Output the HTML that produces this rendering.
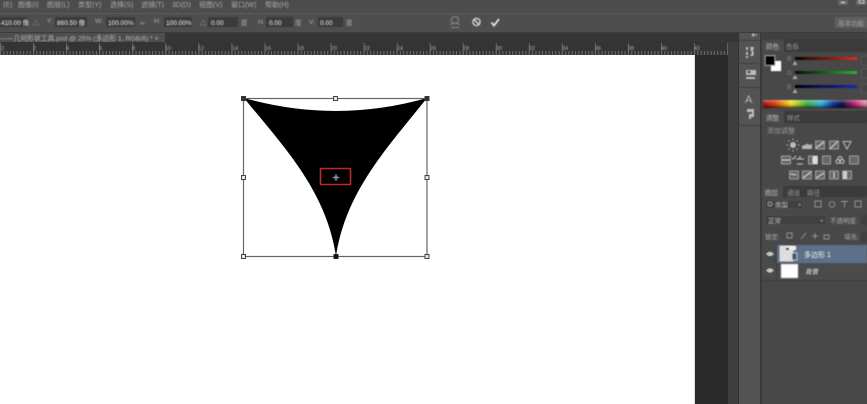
<!DOCTYPE html>
<html lang="zh"><head><meta charset="utf-8"><title>几何形状工具</title>
<style>
html,body{margin:0;padding:0;background:#484848;width:867px;height:404px;overflow:hidden}
svg{display:block}
text{font-family:"Liberation Sans","Noto Sans CJK SC",sans-serif;fill:#aaa;font-size:7px}
.b{filter:url(#bl)}
</style></head><body>
<svg width="867" height="404" viewBox="0 0 867 404" xmlns="http://www.w3.org/2000/svg">
<defs>
<filter id="bl" x="-5%" y="-5%" width="110%" height="110%"><feGaussianBlur stdDeviation="0.6"/></filter>
<pattern id="t" x="0" y="42" width="3.305" height="13" patternUnits="userSpaceOnUse"><rect x="0" y="9" width="1" height="4" fill="#6c6c6c"/></pattern>
<pattern id="T" x="0" y="42" width="33.05" height="13" patternUnits="userSpaceOnUse"><rect x="0" y="1" width="1" height="12" fill="#6a6a6a"/></pattern>
<linearGradient id="sp" x1="0" x2="1" y1="0" y2="0">
<stop offset="0" stop-color="#a01010"/><stop offset=".12" stop-color="#e04010"/><stop offset=".27" stop-color="#f0e020"/><stop offset=".42" stop-color="#40b040"/><stop offset=".56" stop-color="#30b0e0"/><stop offset=".68" stop-color="#103090"/><stop offset=".76" stop-color="#101040"/><stop offset=".88" stop-color="#c02070"/><stop offset="1" stop-color="#f090b0"/></linearGradient>
<linearGradient id="wb" x1="0" x2="0" y1="0" y2="1"><stop offset="0" stop-color="#fff" stop-opacity=".35"/><stop offset=".45" stop-color="#fff" stop-opacity="0"/><stop offset=".55" stop-color="#000" stop-opacity="0"/><stop offset="1" stop-color="#000" stop-opacity=".65"/></linearGradient>
<linearGradient id="r" x1="0" x2="1"><stop offset="0" stop-color="#100000"/><stop offset="1" stop-color="#d83020"/></linearGradient>
<linearGradient id="g" x1="0" x2="1"><stop offset="0" stop-color="#001000"/><stop offset="1" stop-color="#30b030"/></linearGradient>
<linearGradient id="bb" x1="0" x2="1"><stop offset="0" stop-color="#000010"/><stop offset="1" stop-color="#1828b0"/></linearGradient>
</defs>

<!-- bars -->
<rect width="867" height="404" fill="#484848"/>
<rect width="867" height="13" fill="#4c4c4c"/>
<rect y="13" width="867" height="1" fill="#5a5a5a"/>
<rect y="14" width="867" height="18" fill="#4e4e4e"/>
<rect y="32" width="867" height="1" fill="#3c3c3c"/>
<rect y="33" width="738" height="9" fill="#363636"/>
<rect x="0" y="33" width="165" height="9" fill="#4e4e4e"/>
<rect y="42" width="728" height="13" fill="#343434"/>
<rect y="42" width="728" height="13" fill="url(#t)"/>
<rect y="42" width="728" height="13" fill="url(#T)"/>

<!-- document area -->
<rect y="55" width="694" height="349" fill="#fff"/>
<rect x="694" y="55" width="1" height="349" fill="#ddd"/>
<rect x="695" y="55" width="33" height="349" fill="#2a2a2a"/>
<rect x="728" y="42" width="11" height="362" fill="#3e3e3e"/>
<rect x="738" y="33" width="1" height="371" fill="#333"/>
<rect x="739" y="33" width="21" height="371" fill="#535353"/>
<rect x="760" y="33" width="3" height="371" fill="#3a3a3a"/>
<rect x="762" y="33" width="105" height="371" fill="#484848"/>

<!-- shape -->
<path d="M244 98 Q336 124 427 98 C389 146 346 190 336 256 C326 190 283 146 244 98Z" fill="#000"/>
<rect x="243.500" y="98.500" width="183.500" height="158" fill="none" stroke="#666" stroke-width="1.200"/>
<g fill="#e8e8e8" stroke="#444" stroke-width="1">
<rect x="333.500" y="96.500" width="4" height="4"/>
<rect x="241.500" y="175.500" width="4" height="4"/>
<rect x="425" y="175.500" width="4" height="4"/>
<rect x="241.500" y="254.500" width="4" height="4"/>
<rect x="425" y="254.500" width="4" height="4"/>
</g>
<rect x="241.500" y="96.500" width="4" height="4" fill="#333" stroke="#333"/>
<rect x="425" y="96.500" width="4" height="4" fill="#333" stroke="#333"/>
<rect x="334" y="254.500" width="4" height="4" fill="#111" stroke="#222"/>
<rect x="320.500" y="168.500" width="30" height="16" fill="none" stroke="#c02830" stroke-width="1.600" rx=".5"/>
<g stroke="#888" stroke-width="1" fill="none"><circle cx="336" cy="177.500" r="1.600"/><path d="M336 174V181M332.500 177.500H339.500"/></g>

<g class="b">
<!-- menu -->
<text x="3" y="7">(E)</text><text x="18" y="7">图像(I)</text><text x="47" y="7">图层(L)</text><text x="78" y="7">类型(Y)</text><text x="110" y="7">选择(S)</text><text x="141" y="7">滤镜(T)</text><text x="172" y="7">3D(D)</text><text x="199" y="7">视图(V)</text><text x="231" y="7">窗口(W)</text><text x="265" y="7">帮助(H)</text>
<rect x="838" y="0" width="10" height="5" fill="#666"/><rect x="841" y="2" width="4" height="1" fill="#ddd"/>
<rect x="856" y="0" width="11" height="5" fill="#666"/><rect x="859" y="0" width="5" height="3" fill="none" stroke="#ccc" stroke-width=".8"/>

<!-- options -->
<g fill="#3a3a3a"><rect x="0" y="17" width="27" height="10"/><rect x="55" y="17" width="32" height="10"/><rect x="106" y="17" width="29" height="10"/><rect x="164" y="17" width="28" height="10"/><rect x="208" y="17" width="30" height="10"/><rect x="266" y="17" width="27" height="10"/><rect x="318" y="17" width="25" height="10"/></g>
<text x="1" y="25" style="fill:#ccc;font-size:6.500px">410.00 像</text>
<text x="33" y="25" style="font-size:6.500px">△</text><text x="47" y="23" style="font-size:6.500px">Y:</text>
<text x="57" y="25" style="fill:#ccc;font-size:6.500px">860.50 像</text>
<text x="95" y="23" style="font-size:6.500px">W:</text><text x="108" y="25" style="fill:#ccc;font-size:6.500px">100.00%</text>
<text x="140" y="25" style="font-size:6.500px">∞</text><text x="154" y="23" style="font-size:6.500px">H:</text><text x="166" y="25" style="fill:#ccc;font-size:6.500px">100.00%</text>
<text x="200" y="25" style="font-size:6.500px">△</text><text x="211" y="25" style="fill:#ccc;font-size:6.500px">0.00</text><text x="241" y="25" style="font-size:6.500px">度</text>
<text x="258" y="24" style="font-size:6.500px">H:</text><text x="269" y="25" style="fill:#ccc;font-size:6.500px">0.00</text><text x="295" y="25" style="font-size:6.500px">度</text>
<text x="309" y="24" style="font-size:6.500px">V:</text><text x="320" y="25" style="fill:#ccc;font-size:6.500px">0.00</text><text x="346" y="25" style="font-size:6.500px">度</text>
<!-- warp / cancel / commit -->
<g fill="none" stroke="#888" stroke-width="1"><circle cx="455" cy="20" r="3.500"/><path d="M450 24.500Q455 22 460 24.500M451 27.500H459"/></g>
<g fill="none" stroke="#ddd" stroke-width="1.300"><circle cx="476.500" cy="22" r="3.600"/><path d="M474 19.500L479 24.500"/></g>
<path d="M491.500 22.500L494 25.500L499 19" fill="none" stroke="#e4e4e4" stroke-width="1.800"/>
<rect x="835" y="17" width="32" height="11" fill="#5e5e5e"/>
<text x="838" y="25.500" style="fill:#999;font-size:6.500px">基本功能</text>

<!-- tab -->
<text x="0" y="40.500" style="font-size:6.800px;fill:#b8b8b8">——几何形状工具.psd @ 25% (多边形 1, RGB/8) *  ×</text>

<!-- ruler labels -->
<g style="font-size:5.500px">
<text x="1" y="50" style="font-size:5.500px">0</text><text x="33" y="50" style="font-size:5.500px">2</text><text x="66" y="50" style="font-size:5.500px">4</text><text x="99" y="50" style="font-size:5.500px">6</text><text x="132" y="50" style="font-size:5.500px">8</text><text x="165" y="50" style="font-size:5.500px">10</text><text x="198" y="50" style="font-size:5.500px">12</text><text x="232" y="50" style="font-size:5.500px">14</text><text x="265" y="50" style="font-size:5.500px">16</text><text x="298" y="50" style="font-size:5.500px">18</text><text x="331" y="50" style="font-size:5.500px">20</text><text x="364" y="50" style="font-size:5.500px">22</text><text x="397" y="50" style="font-size:5.500px">24</text><text x="430" y="50" style="font-size:5.500px">26</text><text x="463" y="50" style="font-size:5.500px">28</text><text x="496" y="50" style="font-size:5.500px">30</text><text x="529" y="50" style="font-size:5.500px">32</text><text x="562" y="50" style="font-size:5.500px">34</text><text x="595" y="50" style="font-size:5.500px">36</text><text x="628" y="50" style="font-size:5.500px">38</text><text x="661" y="50" style="font-size:5.500px">40</text><text x="694" y="50" style="font-size:5.500px">42</text>
</g>

<!-- strip -->
<path d="M752 35H757M752 35L754 33.500M752 35L754 36.500" stroke="#ccc" fill="none" stroke-width=".8"/>
<g fill="#3e3e3e"><rect x="739" y="40" width="21" height="1"/><rect x="739" y="63" width="21" height="1"/><rect x="739" y="87" width="21" height="1"/><rect x="739" y="125" width="21" height="1"/></g>
<g fill="#bbb">
<rect x="746" y="47" width="2" height="3"/><rect x="746" y="52" width="2" height="3"/><rect x="746" y="56" width="2" height="2"/><path d="M750 47h4l-1 4 1 2-1 3h-3l2-3-1-2z"/>
<rect x="746" y="70" width="10" height="5"/><circle cx="749" cy="72" r="1.500" fill="#444"/><rect x="746" y="77" width="9" height="2"/>
<path d="M749 114h3v-2h2v5h-3v2h-2z"/><rect x="747" y="109" width="7" height="3"/>
</g>
<text x="745" y="103" style="font-size:11px;fill:#bbb">A</text>

<!-- colour panel -->
<rect x="762" y="33" width="105" height="7" fill="#404040"/>
<rect x="762" y="40" width="105" height="12" fill="#3a3a3a"/>
<rect x="762" y="40" width="22" height="12" fill="#4c4c4c"/>
<text x="766" y="48.500" style="font-size:6.500px">颜色</text><text x="786" y="48.500" style="font-size:6.500px;fill:#888">色板</text>
<rect x="771" y="61" width="10" height="10" fill="#fff" stroke="#ccc" stroke-width=".5"/>
<rect x="765" y="55.500" width="10" height="10" fill="#000" stroke="#bbb" stroke-width=".7"/>
<g><text x="787" y="61" style="font-size:6px;fill:#888">R</text><text x="787" y="75" style="font-size:6px;fill:#888">G</text><text x="787" y="89" style="font-size:6px;fill:#888">B</text></g>
<rect x="795" y="57" width="62" height="3" fill="url(#r)"/><rect x="795" y="71" width="62" height="3" fill="url(#g)"/><rect x="795" y="85" width="62" height="3" fill="url(#bb)"/>
<g fill="#aaa"><path d="M795 61l-2.500 4h5z"/><path d="M795 75l-2.500 4h5z"/><path d="M795 89l-2.500 4h5z"/></g>
<g fill="#444" stroke="#5c5c5c" stroke-width=".7"><rect x="861.500" y="56" width="7" height="9"/><rect x="861.500" y="69" width="7" height="9"/><rect x="861.500" y="84" width="7" height="9"/></g>
<rect x="763" y="100" width="104" height="8" fill="url(#sp)"/>
<rect x="763" y="100" width="104" height="8" fill="url(#wb)"/>

<!-- adjustments -->
<rect x="762" y="111" width="105" height="12" fill="#3a3a3a"/>
<rect x="762" y="111" width="22" height="12" fill="#4c4c4c"/>
<text x="766" y="120" style="font-size:6.500px">调整</text><text x="787" y="120" style="font-size:6.500px;fill:#888">样式</text>
<text x="767" y="133" style="font-size:7px;fill:#999">添加调整</text>
<g fill="none" stroke="#bbb" stroke-width="1">
<circle cx="793" cy="145" r="2.500" fill="#bbb"/><path d="M793 140v-1.500M793 151.500V150M788 145h-1.500M799.500 145H798M789.500 141.500l-1-1M797.500 149.500l-1-1M796.500 141.500l1-1M788.500 149.500l1-1"/>
<path d="M843 141.500h8l-4 7.500z"/>
</g>
<path d="M802 149v-3l1-1 1 1 1-2 1 1 1-2 1 2 1-1 1 1 2-1v5z" fill="#b4b4b4"/>
<g fill="#666" stroke="#aaa" stroke-width=".8">
<rect x="815.500" y="141" width="9" height="8"/><rect x="829.500" y="141" width="9" height="8"/>
<rect x="781.500" y="156" width="9" height="8"/><rect x="808.500" y="156" width="9" height="8"/><rect x="822.500" y="156" width="8" height="8"/><rect x="849.500" y="156" width="9" height="8"/>
<rect x="789.500" y="171" width="9" height="8"/><rect x="802.500" y="171" width="9" height="8"/><rect x="815.500" y="171" width="9" height="8"/><rect x="829.500" y="171" width="9" height="8"/><rect x="842.500" y="171" width="9" height="8"/>
</g>
<g stroke="#ccc" stroke-width="1.100" fill="none">
<path d="M816 148L824 142M830 149l8-8M782 160h8M813 156.500v7M790.500 174l6 1M803 178l8-6M816 178l8-5M834 172v6"/>
<path d="M796 156l-3 3h-1M800 156v3M796 159h8M797 164h6"/>
<circle cx="840" cy="158.500" r="2"/><circle cx="838" cy="161.500" r="2"/><circle cx="842" cy="161.500" r="2"/>
</g>
<rect x="813" y="156" width="4.500" height="8" fill="#ddd"/>
<rect x="843" y="171" width="4" height="8" fill="#ccc"/>

<!-- layers -->
<rect x="762" y="186" width="105" height="11" fill="#3a3a3a"/>
<rect x="762" y="186" width="21" height="11" fill="#4c4c4c"/>
<text x="765" y="195" style="font-size:6.500px">图层</text><text x="787" y="195" style="font-size:6.500px;fill:#888">通道</text><text x="807" y="195" style="font-size:6.500px;fill:#888">路径</text>
<rect x="765" y="200" width="38" height="9" fill="#404040" stroke="#545454" stroke-width=".7"/>
<circle cx="770" cy="204" r="2" fill="none" stroke="#aaa" stroke-width=".8"/>
<text x="775" y="207" style="font-size:6.500px">类型</text><text x="798" y="207" style="font-size:6px">÷</text>
<g fill="none" stroke="#999" stroke-width=".9"><rect x="815" y="201" width="6" height="6"/><circle cx="832" cy="204.500" r="2.800"/><path d="M841 201.500h7M844.500 201.500v6"/><rect x="855" y="201" width="6" height="6"/></g>
<rect x="765" y="215" width="61" height="10" fill="#404040" stroke="#585858" stroke-width=".7"/>
<text x="768" y="223" style="font-size:6.500px">正常</text><text x="820" y="223" style="font-size:6px">÷</text>
<text x="830" y="223" style="font-size:6.500px">不透明度:</text>
<rect x="861" y="215" width="6" height="10" fill="#404040"/>
<text x="765" y="239" style="font-size:6.500px">锁定:</text>
<g fill="none" stroke="#999" stroke-width=".9"><rect x="787" y="233" width="5" height="5"/><path d="M801 239l5-6M815 233v6M812 236h6"/><rect x="824" y="235" width="5" height="4"/></g>
<text x="844" y="239" style="font-size:6.500px">填充:</text>
<rect x="861" y="232" width="6" height="10" fill="#404040"/>

<rect x="762" y="245" width="105" height="18" fill="#5c7089"/>
<rect x="762" y="245" width="14" height="18" fill="#4a4a4a"/>
<rect x="762" y="263" width="105" height="17" fill="#4b4b4b"/>
<rect x="762" y="280" width="105" height="1" fill="#3a3a3a"/>
<rect x="776" y="245" width="1" height="35" fill="#3a3a3a"/>
<g fill="none" stroke="#ddd" stroke-width=".9"><path d="M767 254q3-3 6 0q-3 3-6 0zM767 270.500q3-3 6 0q-3 3-6 0z"/></g>
<circle cx="770" cy="254" r="1.100" fill="#ddd"/><circle cx="770" cy="270.500" r="1.100" fill="#ddd"/>
<rect x="780" y="246" width="13" height="15" fill="#ddd" stroke="#eee" stroke-width=".6"/>
<path d="M788 246h8v4h-8z" fill="#eee"/><path d="M786 248h3v2h-3z" fill="#111"/>
<rect x="792" y="253" width="5" height="7" fill="#44586f" stroke="#ddd" stroke-width=".7"/>
<text x="804" y="257" style="font-size:7px;fill:#dfe4ea">多边形 1</text>
<rect x="781" y="264" width="17" height="14" fill="#fff" stroke="#888" stroke-width=".6"/>
<text x="805" y="274" style="font-size:6.500px;font-style:italic;fill:#d8d8d8">背景</text>
</g>
</svg>
</body></html>
